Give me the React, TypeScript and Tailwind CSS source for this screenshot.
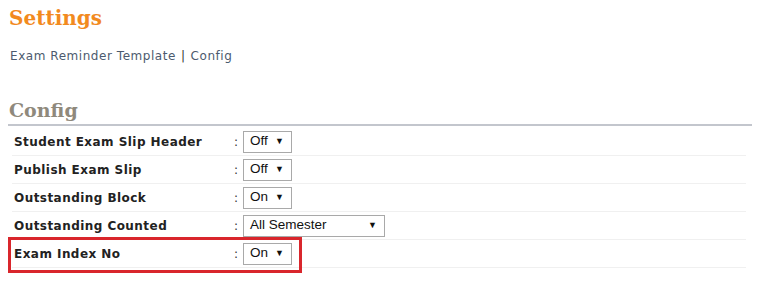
const rows = [
  { label: "Student Exam Slip Header", value: "Off", w: "w-[49px]" },
  { label: "Publish Exam Slip", value: "Off", w: "w-[49px]" },
  { label: "Outstanding Block", value: "On", w: "w-[49px]" },
  { label: "Outstanding Counted", value: "All Semester", w: "w-[142px]" },
  { label: "Exam Index No", value: "On", w: "w-[49px]", marked: true },
];

function FakeSelect({ value, w }: { value: string; w: string }) {
  return (
    <div
      className={`${w} h-[22px] border border-[#a9a9a9] bg-white flex items-center justify-between pl-[6px] pr-[7px] text-[13.5px] text-[#111] font-['Liberation_Sans',Arial,sans-serif]`}
    >
      <span>{value}</span>
      <span className="text-[9px] leading-none">▼</span>
    </div>
  );
}

export default function App() {
  return (
    <div className="w-[760px] h-[293px] bg-white px-[8px] pt-[4px] font-['DejaVu_Sans',Verdana,sans-serif]">
      <h1 className="text-[20px] leading-[28px] font-bold text-[#f28a1e] pl-[1px] font-['DejaVu_Serif',Georgia,serif]">
        Settings
      </h1>
      <div className="mt-[15px] pl-[2px] text-[12px] text-[#4c5a6e] tracking-[0.55px]">
        <span>Exam Reminder Template</span>
        <span className="mx-[5px] text-[#333]">|</span>
        <span>Config</span>
      </div>
      <h2 className="mt-[33px] pl-[1px] text-[19px] leading-[24px] font-bold text-[#8f897c] font-['DejaVu_Serif',Georgia,serif]">
        Config
      </h2>
      <div className="h-[2px] bg-[#c3c6cd] w-[744px] mt-[2px]" />
      <div className="pl-[4px] w-[738px] mt-[2px]">
        {rows.map((r) => (
          <div key={r.label} className="relative flex items-center h-[28px] border-b border-[#f0f0f0]">
            {r.marked && (
              <div className="absolute left-[-4px] top-[-3px] w-[294px] h-[36px] border-[3px] border-[#d9262c] pointer-events-none" />
            )}
            <div className="w-[222px] pl-[2px] text-[12px] font-bold text-[#222] tracking-[0.45px]">{r.label}</div>
            <div className="w-[9px] text-[12px] text-[#333]">:</div>
            <FakeSelect value={r.value} w={r.w} />
          </div>
        ))}
      </div>
    </div>
  );
}
